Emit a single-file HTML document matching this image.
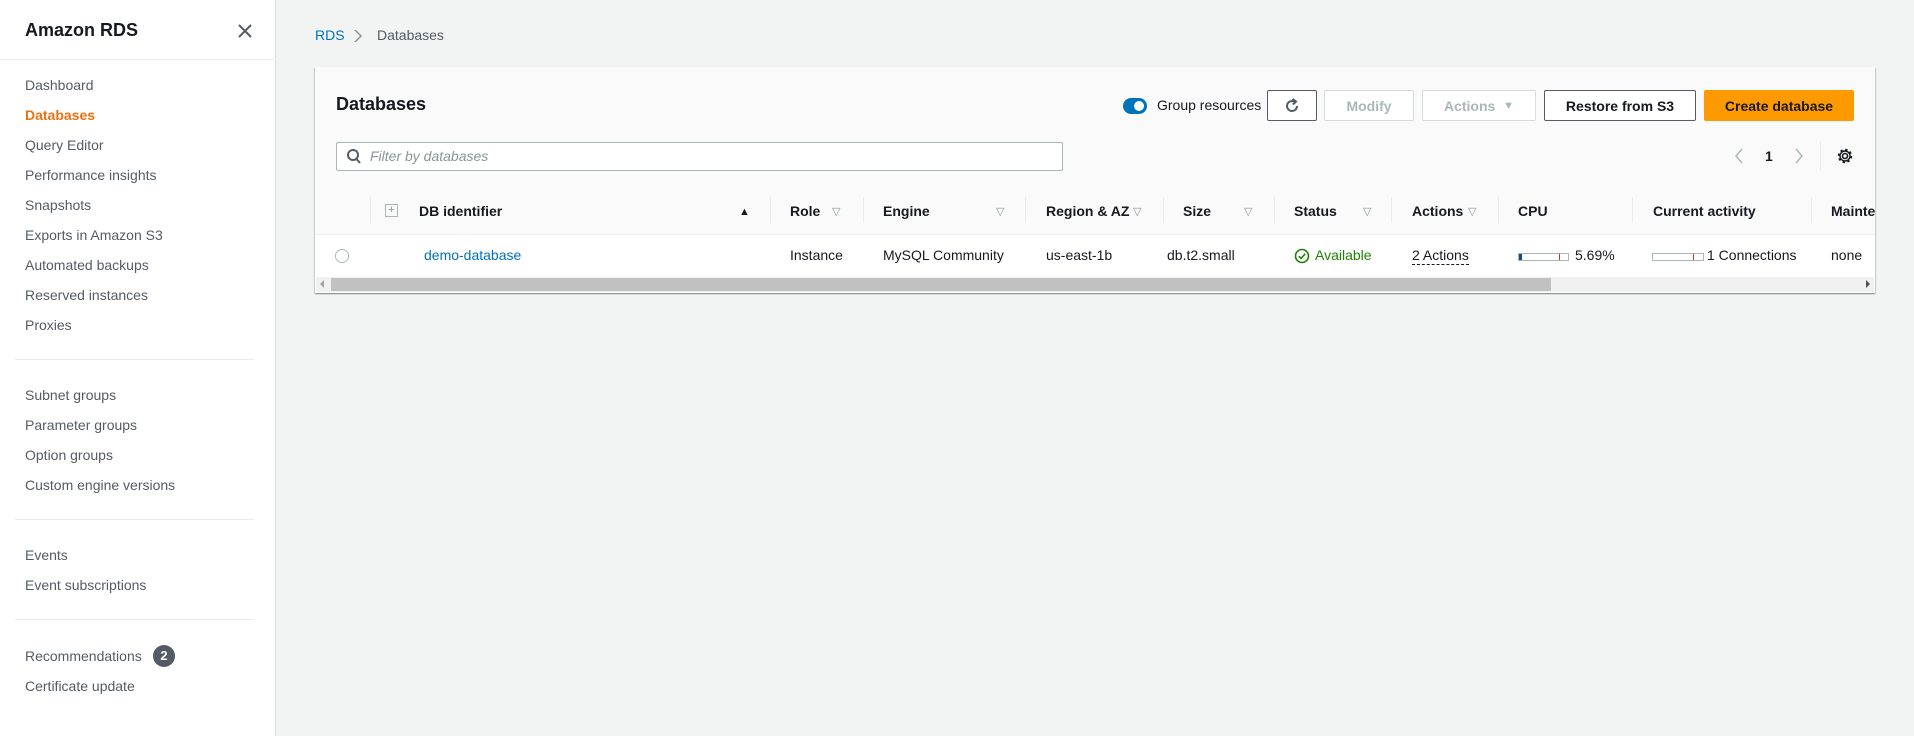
<!DOCTYPE html>
<html><head><meta charset="utf-8"><style>
*{margin:0;padding:0;box-sizing:border-box}
body{width:1914px;height:736px;overflow:hidden;background:#f2f3f3;font-family:"Liberation Sans",sans-serif;font-size:14px;color:#16191f;position:relative}
.a{position:absolute;white-space:nowrap}
#side{position:absolute;left:0;top:0;width:276px;height:736px;background:#fff;border-right:1px solid #d5dbdb}
.nav{position:absolute;left:25px;color:#545b64;font-size:14px;line-height:18px}
.hr{position:absolute;left:15px;width:239px;height:1px;background:#e9ebed}
.btn{position:absolute;top:90px;height:31px;border:1px solid #545b64;border-radius:2px;background:#fff;font-weight:bold;font-size:14px;color:#545b64;display:flex;align-items:center;justify-content:center}
.dis{border-color:#d5dbdb;color:#aab7b8}
.th{position:absolute;top:203px;font-weight:bold;color:#16191f}
.tri{position:absolute;top:205px;color:#879596;font-size:11px}
.dv{position:absolute;top:197px;width:1px;height:26px;background:#eaeded}
.td{position:absolute;top:247px;color:#16191f}
</style></head><body>
<div id="side">
 <div class="a" style="left:25px;top:20px;font-size:18px;font-weight:bold;color:#16191f">Amazon RDS</div>
 <svg class="a" style="left:237px;top:23px" width="16" height="16" viewBox="0 0 16 16"><path d="M2 2L14 14M14 2L2 14" stroke="#545b64" stroke-width="2"/></svg>
 <div class="a" style="left:0;top:59px;width:276px;height:1px;background:#eaeded"></div>
 <div class="nav" style="top:76px">Dashboard</div>
 <div class="nav" style="top:106px;color:#ec7211;font-weight:bold">Databases</div>
 <div class="nav" style="top:136px">Query Editor</div>
 <div class="nav" style="top:166px">Performance insights</div>
 <div class="nav" style="top:196px">Snapshots</div>
 <div class="nav" style="top:226px">Exports in Amazon S3</div>
 <div class="nav" style="top:256px">Automated backups</div>
 <div class="nav" style="top:286px">Reserved instances</div>
 <div class="nav" style="top:316px">Proxies</div>
 <div class="hr" style="top:359px"></div>
 <div class="nav" style="top:386px">Subnet groups</div>
 <div class="nav" style="top:416px">Parameter groups</div>
 <div class="nav" style="top:446px">Option groups</div>
 <div class="nav" style="top:476px">Custom engine versions</div>
 <div class="hr" style="top:519px"></div>
 <div class="nav" style="top:546px">Events</div>
 <div class="nav" style="top:576px">Event subscriptions</div>
 <div class="hr" style="top:619px"></div>
 <div class="nav" style="top:647px">Recommendations</div>
 <div class="a" style="left:153px;top:645px;width:22px;height:22px;border-radius:11px;background:#545b64;color:#fff;font-weight:bold;font-size:13px;text-align:center;line-height:22px">2</div>
 <div class="nav" style="top:677px">Certificate update</div>
</div>
<div class="a" style="left:315px;top:27px;color:#0073bb">RDS</div>
<svg class="a" style="left:353px;top:28px" width="10" height="16" viewBox="0 0 10 16"><path d="M2 2L8 8L2 14" stroke="#879596" stroke-width="1.5" fill="none"/></svg>
<div class="a" style="left:377px;top:27px;color:#545b64">Databases</div>

<div class="a" style="left:315px;top:67px;width:1560px;height:226px;background:#fff;box-shadow:0 1px 1px rgba(0,28,36,.3),1px 1px 1px rgba(0,28,36,.15),-1px 1px 1px rgba(0,28,36,.15);overflow:hidden">
 <div class="a" style="left:0;top:0;width:1560px;height:168px;background:#fafafa;border-bottom:1px solid #eaeded"></div>
 <div class="a" style="left:21px;top:27px;font-size:18px;font-weight:bold">Databases</div>
</div>
<div class="a" style="left:1123px;top:98px;width:24px;height:16px;border-radius:8px;background:#0073bb"></div>
<div class="a" style="left:1134px;top:101px;width:10px;height:10px;border-radius:5px;background:#fff"></div>
<div class="a" style="left:1157px;top:97px;color:#16191f">Group resources</div>
<div class="btn" style="left:1267px;width:50px"><svg width="18" height="18" viewBox="0 0 18 18"><path d="M14 9A5 5 0 1 1 11.5 4.7" stroke="#545b64" stroke-width="2" fill="none"/><path d="M9.5 2L13 4.5L10 7.5" stroke="#545b64" stroke-width="2" fill="none"/></svg></div>
<div class="btn dis" style="left:1324px;width:90px">Modify</div>
<div class="btn dis" style="left:1422px;width:114px">Actions&nbsp;&nbsp;<span style="font-size:11px">▼</span></div>
<div class="btn" style="left:1544px;width:152px;color:#16191f">Restore from S3</div>
<div class="btn" style="left:1704px;width:150px;background:#ff9900;border-color:#ff9900;color:#16191f">Create database</div>

<div class="a" style="left:336px;top:142px;width:727px;height:29px;border:1px solid #aab7b8;border-radius:2px;background:#fff"></div>
<svg class="a" style="left:346px;top:148px" width="16" height="18" viewBox="0 0 16 18"><circle cx="7" cy="7" r="5" stroke="#545b64" stroke-width="2" fill="none"/><path d="M10.5 11L14 15" stroke="#545b64" stroke-width="2"/></svg>
<div class="a" style="left:370px;top:148px;color:#879596;font-style:italic">Filter by databases</div>

<svg class="a" style="left:1734px;top:147px" width="10" height="18" viewBox="0 0 10 18"><path d="M8 2L2 9L8 16" stroke="#aab7b8" stroke-width="1.5" fill="none"/></svg>
<div class="a" style="left:1765px;top:148px;font-weight:bold">1</div>
<svg class="a" style="left:1794px;top:147px" width="10" height="18" viewBox="0 0 10 18"><path d="M2 2L8 9L2 16" stroke="#aab7b8" stroke-width="1.5" fill="none"/></svg>
<div class="a" style="left:1820px;top:141px;width:1px;height:30px;background:#eaeded"></div>
<svg class="a" style="left:1836px;top:147px" width="18" height="18" viewBox="0 0 18 18"><circle cx="9" cy="9" r="2.5" stroke="#16191f" stroke-width="1.6" fill="none"/><circle cx="9" cy="9" r="6" stroke="#16191f" stroke-width="2.4" fill="none" stroke-dasharray="2.3 2.4"/><circle cx="9" cy="9" r="5" stroke="#16191f" stroke-width="1.4" fill="none"/></svg>

<div class="dv" style="left:370px"></div>
<div class="a" style="left:385px;top:204px;width:13px;height:13px;border:1px solid #aab7b8;color:#879596;font-size:11px;line-height:10px;text-align:center">+</div>
<div class="th" style="left:419px">DB identifier</div>
<div class="a" style="left:739px;top:206px;font-size:11px">▲</div>
<div class="dv" style="left:770px"></div>
<div class="th" style="left:790px">Role</div><div class="tri" style="left:832px">▽</div>
<div class="dv" style="left:863px"></div>
<div class="th" style="left:883px">Engine</div><div class="tri" style="left:996px">▽</div>
<div class="dv" style="left:1025px"></div>
<div class="th" style="left:1046px">Region &amp; AZ</div><div class="tri" style="left:1133px">▽</div>
<div class="dv" style="left:1163px"></div>
<div class="th" style="left:1183px">Size</div><div class="tri" style="left:1244px">▽</div>
<div class="dv" style="left:1274px"></div>
<div class="th" style="left:1294px">Status</div><div class="tri" style="left:1363px">▽</div>
<div class="dv" style="left:1391px"></div>
<div class="th" style="left:1412px">Actions</div><div class="tri" style="left:1468px">▽</div>
<div class="dv" style="left:1498px"></div>
<div class="th" style="left:1518px">CPU</div>
<div class="dv" style="left:1632px"></div>
<div class="th" style="left:1653px">Current activity</div>
<div class="dv" style="left:1811px"></div>
<div class="th" style="left:1831px;width:44px;overflow:hidden">Maintenance</div>
<div class="a" style="left:315px;top:234px;width:1560px;height:1px;background:#eaeded"></div>

<div class="a" style="left:335px;top:249px;width:14px;height:14px;border:1px solid #aab7b8;border-radius:7px"></div>
<div class="td" style="left:424px;color:#0073bb">demo-database</div>
<div class="td" style="left:790px">Instance</div>
<div class="td" style="left:883px">MySQL Community</div>
<div class="td" style="left:1046px">us-east-1b</div>
<div class="td" style="left:1167px">db.t2.small</div>
<svg class="a" style="left:1294px;top:248px" width="16" height="16" viewBox="0 0 16 16"><circle cx="8" cy="8" r="6.5" stroke="#1d8102" stroke-width="1.6" fill="none"/><path d="M4.8 8.2L7 10.4L11.2 5.8" stroke="#1d8102" stroke-width="1.6" fill="none"/></svg>
<div class="td" style="left:1315px;color:#1d8102">Available</div>
<div class="td" style="left:1412px;border-bottom:1px dashed #16191f;line-height:17px">2 Actions</div>
<div class="a" style="left:1518px;top:253px;width:51px;height:8px;border:1px solid #aab7b8;background:#fff"><div style="position:absolute;left:0;top:0;width:3px;height:6px;background:#1a4a7a"></div><div style="position:absolute;left:40px;top:0;width:1px;height:6px;background:#d13212"></div></div>
<div class="td" style="left:1575px">5.69%</div>
<div class="a" style="left:1652px;top:253px;width:52px;height:8px;border:1px solid #aab7b8;background:#fff"><div style="position:absolute;left:40px;top:0;width:1px;height:6px;background:#d13212"></div></div>
<div class="td" style="left:1707px">1 Connections</div>
<div class="td" style="left:1831px">none</div>

<div class="a" style="left:316px;top:277px;width:1558px;height:15px;background:#f1f1f1"></div>
<div class="a" style="left:331px;top:278px;width:1220px;height:13px;background:#c1c1c1"></div>
<div class="a" style="left:320px;top:280px;width:0;height:0;border-top:4px solid transparent;border-bottom:4px solid transparent;border-right:4px solid #a3a3a3"></div>
<div class="a" style="left:1866px;top:280px;width:0;height:0;border-top:4px solid transparent;border-bottom:4px solid transparent;border-left:4px solid #505050"></div>
</body></html>
